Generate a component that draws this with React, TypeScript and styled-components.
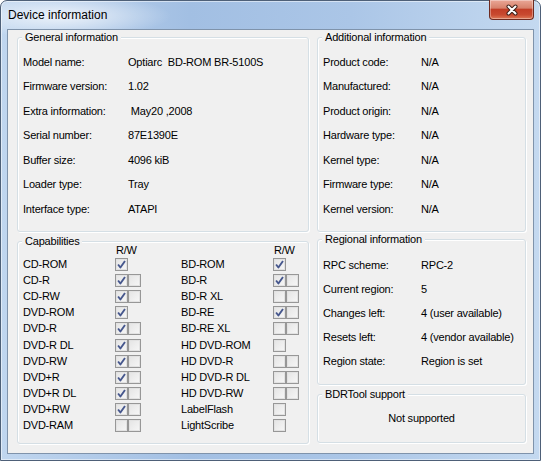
import React from 'react'
import styled, { createGlobalStyle } from 'styled-components'

const general: [string, string][] = [
  ['Model name:', 'Optiarc  BD-ROM BR-5100S'],
  ['Firmware version:', '1.02'],
  ['Extra information:', ' May20 ,2008'],
  ['Serial number:', '87E1390E'],
  ['Buffer size:', '4096 kiB'],
  ['Loader type:', 'Tray'],
  ['Interface type:', 'ATAPI']
]

const additional: [string, string][] = [
  ['Product code:', 'N/A'],
  ['Manufactured:', 'N/A'],
  ['Product origin:', 'N/A'],
  ['Hardware type:', 'N/A'],
  ['Kernel type:', 'N/A'],
  ['Firmware type:', 'N/A'],
  ['Kernel version:', 'N/A']
]

const regional: [string, string][] = [
  ['RPC scheme:', 'RPC-2'],
  ['Current region:', '5'],
  ['Changes left:', '4 (user available)'],
  ['Resets left:', '4 (vendor available)'],
  ['Region state:', 'Region is set']
]

type Cap = [string, boolean[]]

const capsLeft: Cap[] = [
  ['CD-ROM', [true]],
  ['CD-R', [true, false]],
  ['CD-RW', [true, false]],
  ['DVD-ROM', [true]],
  ['DVD-R', [true, false]],
  ['DVD-R DL', [true, false]],
  ['DVD-RW', [true, false]],
  ['DVD+R', [true, false]],
  ['DVD+R DL', [true, false]],
  ['DVD+RW', [true, false]],
  ['DVD-RAM', [false, false]]
]

const capsRight: Cap[] = [
  ['BD-ROM', [true]],
  ['BD-R', [true, false]],
  ['BD-R XL', [false, false]],
  ['BD-RE', [true, false]],
  ['BD-RE XL', [false, false]],
  ['HD DVD-ROM', [false]],
  ['HD DVD-R', [false, false]],
  ['HD DVD-R DL', [false, false]],
  ['HD DVD-RW', [false, false]],
  ['LabelFlash', [false]],
  ['LightScribe', [false]]
]

function CheckBox({ checked }: { checked: boolean }) {
  return (
    <Box>
      {checked && (
        <svg width="9" height="9" viewBox="0 0 9 9">
          <path d="M1.1 4.5 L3.4 7.5 L8 1" fill="none" stroke="#46578d" strokeWidth="1.9" strokeLinejoin="round" />
        </svg>
      )}
    </Box>
  )
}

function CapList({ items }: { items: Cap[] }) {
  return (
    <CapGrid>
      <span />
      <RW>R/W</RW>
      {items.map(([name, checks]) => (
        <React.Fragment key={name}>
          <span>{name}</span>
          <Checks>
            {checks.map((c, i) => <CheckBox key={i} checked={c} />)}
          </Checks>
        </React.Fragment>
      ))}
    </CapGrid>
  )
}

function InfoRows({ rows }: { rows: [string, string][] }) {
  return (
    <>
      {rows.map(([k, v]) => (
        <React.Fragment key={k}>
          <span>{k}</span>
          <Value>{v}</Value>
        </React.Fragment>
      ))}
    </>
  )
}

export default function App() {
  return (
    <>
      <GlobalStyle />
      <Window>
        <TitleBar>
          <Title>Device information</Title>
          <CloseButton>
            <svg width="14" height="12" viewBox="0 0 14 12">
              <path d="M3.5 2.5 L10.5 9.5 M10.5 2.5 L3.5 9.5" stroke="#3b1e17" strokeWidth="4" strokeLinecap="round" />
              <path d="M3.5 2.5 L10.5 9.5 M10.5 2.5 L3.5 9.5" stroke="#ffffff" strokeWidth="2" strokeLinecap="round" />
            </svg>
          </CloseButton>
        </TitleBar>
        <Content>
          <Column $w={292}>
            <Group $h={201}>
              <Legend>General information</Legend>
              <InfoGrid $label={105} $row={24.5} $top={7}>
                <InfoRows rows={general} />
              </InfoGrid>
            </Group>
            <Group $h={209} $gap={3}>
              <Legend>Capabilities</Legend>
              <CapsBody>
                <CapList items={capsLeft} />
                <CapList items={capsRight} />
              </CapsBody>
            </Group>
          </Column>
          <Column $w={209}>
            <Group $h={201}>
              <Legend>Additional information</Legend>
              <InfoGrid $label={98} $row={24.5} $top={7}>
                <InfoRows rows={additional} />
              </InfoGrid>
            </Group>
            <Group $h={152} $gap={1}>
              <Legend>Regional information</Legend>
              <InfoGrid $label={98} $row={24.2} $top={8}>
                <InfoRows rows={regional} />
              </InfoGrid>
            </Group>
            <Group $h={55} $gap={3}>
              <Legend>BDRTool support</Legend>
              <Centered>Not supported</Centered>
            </Group>
          </Column>
        </Content>
      </Window>
    </>
  )
}

const GlobalStyle = createGlobalStyle`
  html, body { margin: 0; padding: 0; background: #ffffff; }
  body { font-family: "Liberation Sans", Arial, sans-serif; }
`

const Window = styled.div`
  width: 541px;
  height: 461px;
  box-sizing: border-box;
  display: flex;
  flex-direction: column;
  padding: 0 6px 6px;
  border: 1px solid #4e6078;
  border-radius: 7px 7px 0 0;
  background:
    radial-gradient(ellipse 110px 22px at 60px 15px, rgba(255,255,255,0.75), rgba(255,255,255,0)),
    linear-gradient(to right, #c0d6ef 0%, #a2bfe3 35%, #abc6e7 65%, #c4d9f0 100%);
  box-shadow: inset 0 0 0 1px rgba(255,255,255,0.5);
`

const TitleBar = styled.div`
  height: 28px;
  display: flex;
  align-items: flex-start;
`

const Title = styled.div`
  padding: 7px 0 0 1px;
  font-family: "Liberation Sans", Arial, sans-serif;
  font-size: 12px;
  line-height: 15px;
  color: #000000;
`

const CloseButton = styled.div`
  margin: -1px 0 0 auto;
  width: 45px;
  height: 20px;
  box-sizing: border-box;
  display: flex;
  align-items: center;
  justify-content: center;
  border: 1px solid #6e2a20;
  border-top: none;
  border-radius: 0 0 4px 4px;
  background: linear-gradient(to bottom, #eaa797 0%, #d7826c 42%, #c23e27 50%, #c94a30 78%, #dd7a58 100%);
  box-shadow: inset 0 0 0 1px rgba(255,255,255,0.35);
`

const Content = styled.div`
  flex: 1;
  display: flex;
  gap: 8px;
  padding: 1px 7px 8px 9px;
  border: 1px solid #7f93ab;
  background: #f0f0f0;
`

const Column = styled.div<{ $w: number }>`
  width: ${({ $w }) => $w}px;
  display: flex;
  flex-direction: column;
`

const Group = styled.fieldset<{ $h: number; $gap?: number }>`
  margin: ${({ $gap }) => $gap || 0}px 0 0;
  padding: 0;
  min-width: 0;
  height: ${({ $h }) => $h}px;
  box-sizing: border-box;
  border: 1px solid #d5dfe5;
  border-radius: 3px;
  box-shadow: inset 1px 1px 0 #ffffff, 1px 1px 0 #ffffff;
  font-size: 11px;
  letter-spacing: -0.2px;
  color: #000000;
`

const Legend = styled.legend`
  margin-left: 4px;
  padding: 0 3px;
  font-size: 11px;
  line-height: 12px;
  background: #f0f0f0;
`

const InfoGrid = styled.div<{ $label: number; $row: number; $top: number }>`
  display: grid;
  grid-template-columns: ${({ $label }) => $label}px 1fr;
  grid-auto-rows: ${({ $row }) => $row}px;
  align-items: center;
  padding: ${({ $top }) => $top}px 0 0 5px;
  line-height: 13px;
`

const Value = styled.span`
  white-space: pre;
`

const Centered = styled.div`
  padding-top: 12px;
  text-align: center;
  line-height: 13px;
`

const CapsBody = styled.div`
  display: flex;
  margin-top: -2px;
  padding-left: 5px;
`

const CapGrid = styled.div`
  flex: none;
  width: 158px;
  display: grid;
  grid-template-columns: 92px 1fr;
  grid-template-rows: 11px repeat(11, 16.2px);
  align-items: center;
  line-height: 13px;

  &:last-child {
    flex: 1;
    width: auto;
  }
`

const RW = styled.span`
  padding-left: 1px;
  line-height: 11px;
`

const Checks = styled.div`
  display: flex;
`

const Box = styled.span`
  width: 13px;
  height: 13px;
  box-sizing: border-box;
  display: flex;
  align-items: center;
  justify-content: center;
  border: 1px solid #979797;
  background: linear-gradient(to bottom right, #e4e4e4, #f7f7f7);
  box-shadow: inset 0 0 0 1px #e2e2e2;
`
